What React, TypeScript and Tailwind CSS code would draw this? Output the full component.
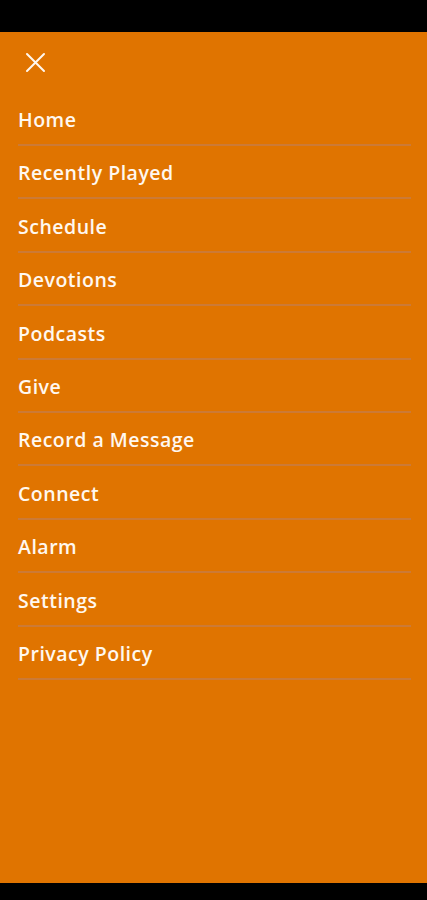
import React from 'react';

// row heights alternate so that rows land on the 53.4px rhythm
const items = [
  { label: 'Home', h: 'h-[51px]' },
  { label: 'Recently Played', h: 'h-[51px]' },
  { label: 'Schedule', h: 'h-[52px]' },
  { label: 'Devotions', h: 'h-[51px]' },
  { label: 'Podcasts', h: 'h-[52px]' },
  { label: 'Give', h: 'h-[51px]' },
  { label: 'Record a Message', h: 'h-[51px]' },
  { label: 'Connect', h: 'h-[52px]' },
  { label: 'Alarm', h: 'h-[51px]' },
  { label: 'Settings', h: 'h-[52px]' },
  { label: 'Privacy Policy', h: 'h-[51px]' },
];

export default function App() {
  return (
    <div className="w-[427px] h-[900px] bg-black flex flex-col" style={{ fontFamily: '"Open Sans", sans-serif' }}>
      <div className="h-[32px] shrink-0" />
      <div className="h-[851px] shrink-0 bg-[#e07400] flex flex-col">
        {/* close button */}
        <div className="h-[61px] flex items-center pl-[25px]">
          <svg width="21" height="21" viewBox="0 0 21 21" fill="none" stroke="#fff7ee" strokeWidth="2" strokeLinecap="round">
            <path d="M2 2 L19 19 M19 2 L2 19" />
          </svg>
        </div>
        <ul className="ml-[18px] mr-[16px] flex flex-col">
          {items.map((item) => (
            <li key={item.label} className="flex flex-col">
              <div className={`${item.h} flex items-center pt-[3px] text-[19.5px] font-semibold text-[#fff8f0] tracking-[0.5px]`}>
                {item.label}
              </div>
              <div className="h-[2px] bg-[#cc7a36]" />
            </li>
          ))}
        </ul>
      </div>
    </div>
  );
}
